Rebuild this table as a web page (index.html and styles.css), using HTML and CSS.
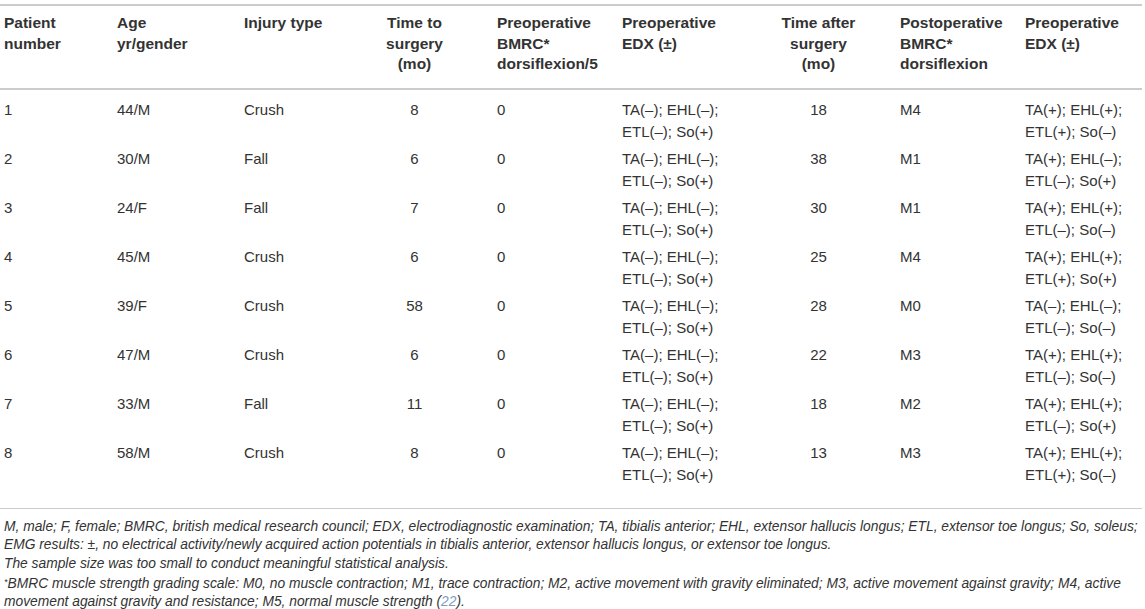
FILE: index.html
```html
<!DOCTYPE html>
<html lang="en">
<head>
    <meta charset="UTF-8">
    <meta name="viewport" content="width=device-width, initial-scale=1.0">
    <title>Table 1 - Patient characteristics</title>
    <link rel="stylesheet" href="styles.css">
</head>
<body>
    <div class="table-wrap">
        <table class="data-table">
            <colgroup>
                <col class="c-num">
                <col class="c-age">
                <col class="c-injury">
                <col class="c-time">
                <col class="c-bmrc">
                <col class="c-edx">
                <col class="c-after">
                <col class="c-post">
                <col class="c-edx2">
            </colgroup>
            <thead>
                <tr>
                    <th>Patient<br>number</th>
                    <th>Age<br>yr/gender</th>
                    <th>Injury type</th>
                    <th class="center time">Time to<br>surgery<br>(mo)</th>
                    <th>Preoperative<br>BMRC*<br>dorsiflexion/5</th>
                    <th>Preoperative<br>EDX (±)</th>
                    <th class="center after">Time after<br>surgery<br>(mo)</th>
                    <th>Postoperative<br>BMRC*<br>dorsiflexion</th>
                    <th>Preoperative<br>EDX (±)</th>
                </tr>
            </thead>
            <tbody>
                <tr>
                    <td>1</td><td>44/M</td><td>Crush</td><td class="center time">8</td><td>0</td>
                    <td>TA(–); EHL(–);<br>ETL(–); So(+)</td><td class="center after">18</td><td>M4</td>
                    <td>TA(+); EHL(+);<br>ETL(+); So(–)</td>
                </tr>
                <tr>
                    <td>2</td><td>30/M</td><td>Fall</td><td class="center time">6</td><td>0</td>
                    <td>TA(–); EHL(–);<br>ETL(–); So(+)</td><td class="center after">38</td><td>M1</td>
                    <td>TA(+); EHL(–);<br>ETL(–); So(+)</td>
                </tr>
                <tr>
                    <td>3</td><td>24/F</td><td>Fall</td><td class="center time">7</td><td>0</td>
                    <td>TA(–); EHL(–);<br>ETL(–); So(+)</td><td class="center after">30</td><td>M1</td>
                    <td>TA(+); EHL(+);<br>ETL(–); So(–)</td>
                </tr>
                <tr>
                    <td>4</td><td>45/M</td><td>Crush</td><td class="center time">6</td><td>0</td>
                    <td>TA(–); EHL(–);<br>ETL(–); So(+)</td><td class="center after">25</td><td>M4</td>
                    <td>TA(+); EHL(+);<br>ETL(+); So(+)</td>
                </tr>
                <tr>
                    <td>5</td><td>39/F</td><td>Crush</td><td class="center time">58</td><td>0</td>
                    <td>TA(–); EHL(–);<br>ETL(–); So(+)</td><td class="center after">28</td><td>M0</td>
                    <td>TA(–); EHL(–);<br>ETL(–); So(–)</td>
                </tr>
                <tr>
                    <td>6</td><td>47/M</td><td>Crush</td><td class="center time">6</td><td>0</td>
                    <td>TA(–); EHL(–);<br>ETL(–); So(+)</td><td class="center after">22</td><td>M3</td>
                    <td>TA(+); EHL(+);<br>ETL(–); So(–)</td>
                </tr>
                <tr>
                    <td>7</td><td>33/M</td><td>Fall</td><td class="center time">11</td><td>0</td>
                    <td>TA(–); EHL(–);<br>ETL(–); So(+)</td><td class="center after">18</td><td>M2</td>
                    <td>TA(+); EHL(+);<br>ETL(–); So(+)</td>
                </tr>
                <tr>
                    <td>8</td><td>58/M</td><td>Crush</td><td class="center time">8</td><td>0</td>
                    <td>TA(–); EHL(–);<br>ETL(–); So(+)</td><td class="center after">13</td><td>M3</td>
                    <td>TA(+); EHL(+);<br>ETL(+); So(–)</td>
                </tr>
            </tbody>
        </table>

        <div class="table-foot">
            <p>M, male; F, female; BMRC, british medical research council; EDX, electrodiagnostic examination; TA, tibialis anterior; EHL, extensor hallucis longus; ETL, extensor toe longus; So, soleus;<br>
            EMG results: ±, no electrical activity/newly acquired action potentials in tibialis anterior, extensor hallucis longus, or extensor toe longus.</p>
            <p>The sample size was too small to conduct meaningful statistical analysis.</p>
            <p><span class="star">*</span>BMRC muscle strength grading scale: M0, no muscle contraction; M1, trace contraction; M2, active movement with gravity eliminated; M3, active movement against gravity; M4, active<br>
            movement against gravity and resistance; M5, normal muscle strength (<a href="#ref22" class="ref">22</a>).</p>
        </div>
    </div>
</body>
</html>
```

FILE: styles.css
```css
body {
    margin: 0;
    padding: 4px 0 0 0;
    background-color: #ffffff;
    color: #333333;
    font-family: "Liberation Sans", Arial, sans-serif;
    overflow: hidden;
}

.table-wrap {
    width: 1142px;
}

.data-table {
    width: 100%;
    border-collapse: collapse;
    table-layout: fixed;
    border-top: 2px solid #cccccc;
}

.c-num { width: 113px; }
.c-age { width: 127px; }
.c-injury { width: 100px; }
.c-time { width: 153px; }
.c-bmrc { width: 125px; }
.c-edx { width: 135px; }
.c-after { width: 143px; }
.c-post { width: 125px; }
.c-edx2 { width: 121px; }

.data-table th {
    font-size: 15.5px;
    font-weight: bold;
    line-height: 20.5px;
    text-align: left;
    vertical-align: top;
    padding: 7px 4px 13.5px 4px;
    border-bottom: 2px solid #cccccc;
}

.data-table td {
    font-size: 15px;
    line-height: 22px;
    vertical-align: top;
    padding: 2.5px 4px;
}

.data-table tbody tr:first-child td {
    padding-top: 9px;
}

.data-table tbody tr:last-child td {
    padding-bottom: 22px;
}

.data-table .center {
    text-align: center;
}

.data-table .time {
    padding-right: 8px;
}

.data-table .after {
    padding-right: 16px;
}

.table-foot {
    border-top: 1.5px solid #cccccc;
    padding: 9px 4px 0 4px;
    font-size: 13.8px;
    font-style: italic;
    line-height: 18.3px;
}

.table-foot p {
    margin: 0;
    white-space: nowrap;
}

.star {
    font-size: 9px;
    vertical-align: 3px;
}

.ref {
    color: #7c9cc4;
    text-decoration: none;
}
```
